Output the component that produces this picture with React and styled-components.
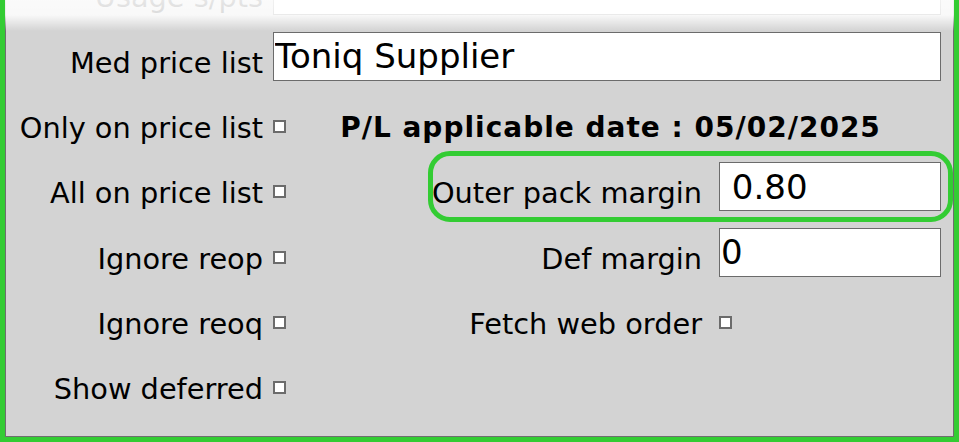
import styled, { createGlobalStyle } from 'styled-components'

const GlobalStyle = createGlobalStyle`
    html, body {
        margin:0;
        padding:0;
        background:#fff;
    }
    body {
        font-family:"DejaVu Sans", Verdana, sans-serif;
    }
`

const Marco = styled.div`
    position:relative;
    width:959px;
    height:442px;
    box-sizing:border-box;
    border:5px solid #33cc33;
    border-top:none;
    overflow:hidden;
`

const Panel = styled.div`
    display:flow-root;
    height:100%;
    box-sizing:border-box;
    background:#d3d3d3;
    border:1px solid #6e6e6e;
    border-top:none;
    overflow:hidden;
`

const Desvanecido = styled.div`
    position:absolute;
    top:0;
    left:0;
    right:0;
    height:32px;
    pointer-events:none;
    background:linear-gradient(180deg, rgba(255,255,255,0.9) 0px, rgba(255,255,255,0.86) 15px, rgba(255,255,255,0) 31px);
`

const Grilla = styled.div`
    display:grid;
    margin-top:-50px;
    padding-right:12px;
    grid-template-columns:267px 13px 1fr 222px;
    grid-template-rows:repeat(7, 65.33px);
`

const Etiqueta = styled.label`
    grid-row:${props => props.$row};
    grid-column:${props => props.$col};
    align-self:end;
    text-align:right;
    font-size:28.8px;
    line-height:32px;
    color:#000;
    white-space:nowrap;
    padding-bottom:2px;
    padding-right:${props => props.$col === 1 ? '10px' : '17px'};
`

const Casilla = styled.span`
    grid-row:${props => props.$row};
    grid-column:${props => props.$col};
    align-self:end;
    width:13px;
    height:13px;
    box-sizing:border-box;
    border:2px solid #6b6b6b;
    background:#fff;
    margin-bottom:13px;
`

const Campo = styled.input`
    grid-row:${props => props.$row};
    grid-column:${props => props.$col};
    align-self:end;
    height:49px;
    min-width:0;
    box-sizing:border-box;
    border:1px solid #6b6b6b;
    border-radius:0;
    background:#fff;
    padding:0 1px;
    font-family:"DejaVu Sans", Verdana, sans-serif;
    font-size:34px;
    color:#000;
    outline:none;
`

const Fecha = styled.div`
    grid-row:${props => props.$row};
    grid-column:3 / 5;
    align-self:end;
    text-align:center;
    font-size:28px;
    font-weight:bold;
    letter-spacing:1px;
    line-height:32px;
    padding-bottom:2px;
    padding-right:6px;
    white-space:nowrap;
`

const Resaltado = styled.div`
    grid-row:${props => props.$row};
    grid-column:3 / 5;
    justify-self:end;
    align-self:end;
    width:525px;
    height:71px;
    box-sizing:border-box;
    margin-right:-12px;
    margin-bottom:-11px;
    border:5px solid #33cc33;
    border-radius:22px;
    pointer-events:none;
`

const opciones = ['Only on price list', 'All on price list', 'Ignore reop', 'Ignore reoq', 'Show deferred']

function App() {
  return (
    <>
      <GlobalStyle />
      <Marco>
        <Panel>
          <Grilla>
            <Etiqueta $row={1} $col={1}>Usage s/pts</Etiqueta>
            <Campo $row={1} $col="2 / 5" readOnly defaultValue="" />

            <Etiqueta $row={2} $col={1}>Med price list</Etiqueta>
            <Campo $row={2} $col="2 / 5" readOnly defaultValue="Toniq Supplier" />

            {opciones.map((texto, i) => [
                <Etiqueta key={texto + 'l'} $row={i + 3} $col={1}>{texto}</Etiqueta>,
                <Casilla key={texto + 'c'} $row={i + 3} $col={2} />
            ])}

            <Fecha $row={3}>P/L applicable date : 05/02/2025</Fecha>

            <Etiqueta $row={4} $col={3}>Outer pack margin</Etiqueta>
            <Campo $row={4} $col={4} readOnly defaultValue=" 0.80" />
            <Resaltado $row={4} />

            <Etiqueta $row={5} $col={3}>Def margin</Etiqueta>
            <Campo $row={5} $col={4} readOnly defaultValue="0" />

            <Etiqueta $row={6} $col={3}>Fetch web order</Etiqueta>
            <Casilla $row={6} $col={4} />
          </Grilla>
        </Panel>
        <Desvanecido />
      </Marco>
    </>
  )
}

export default App
